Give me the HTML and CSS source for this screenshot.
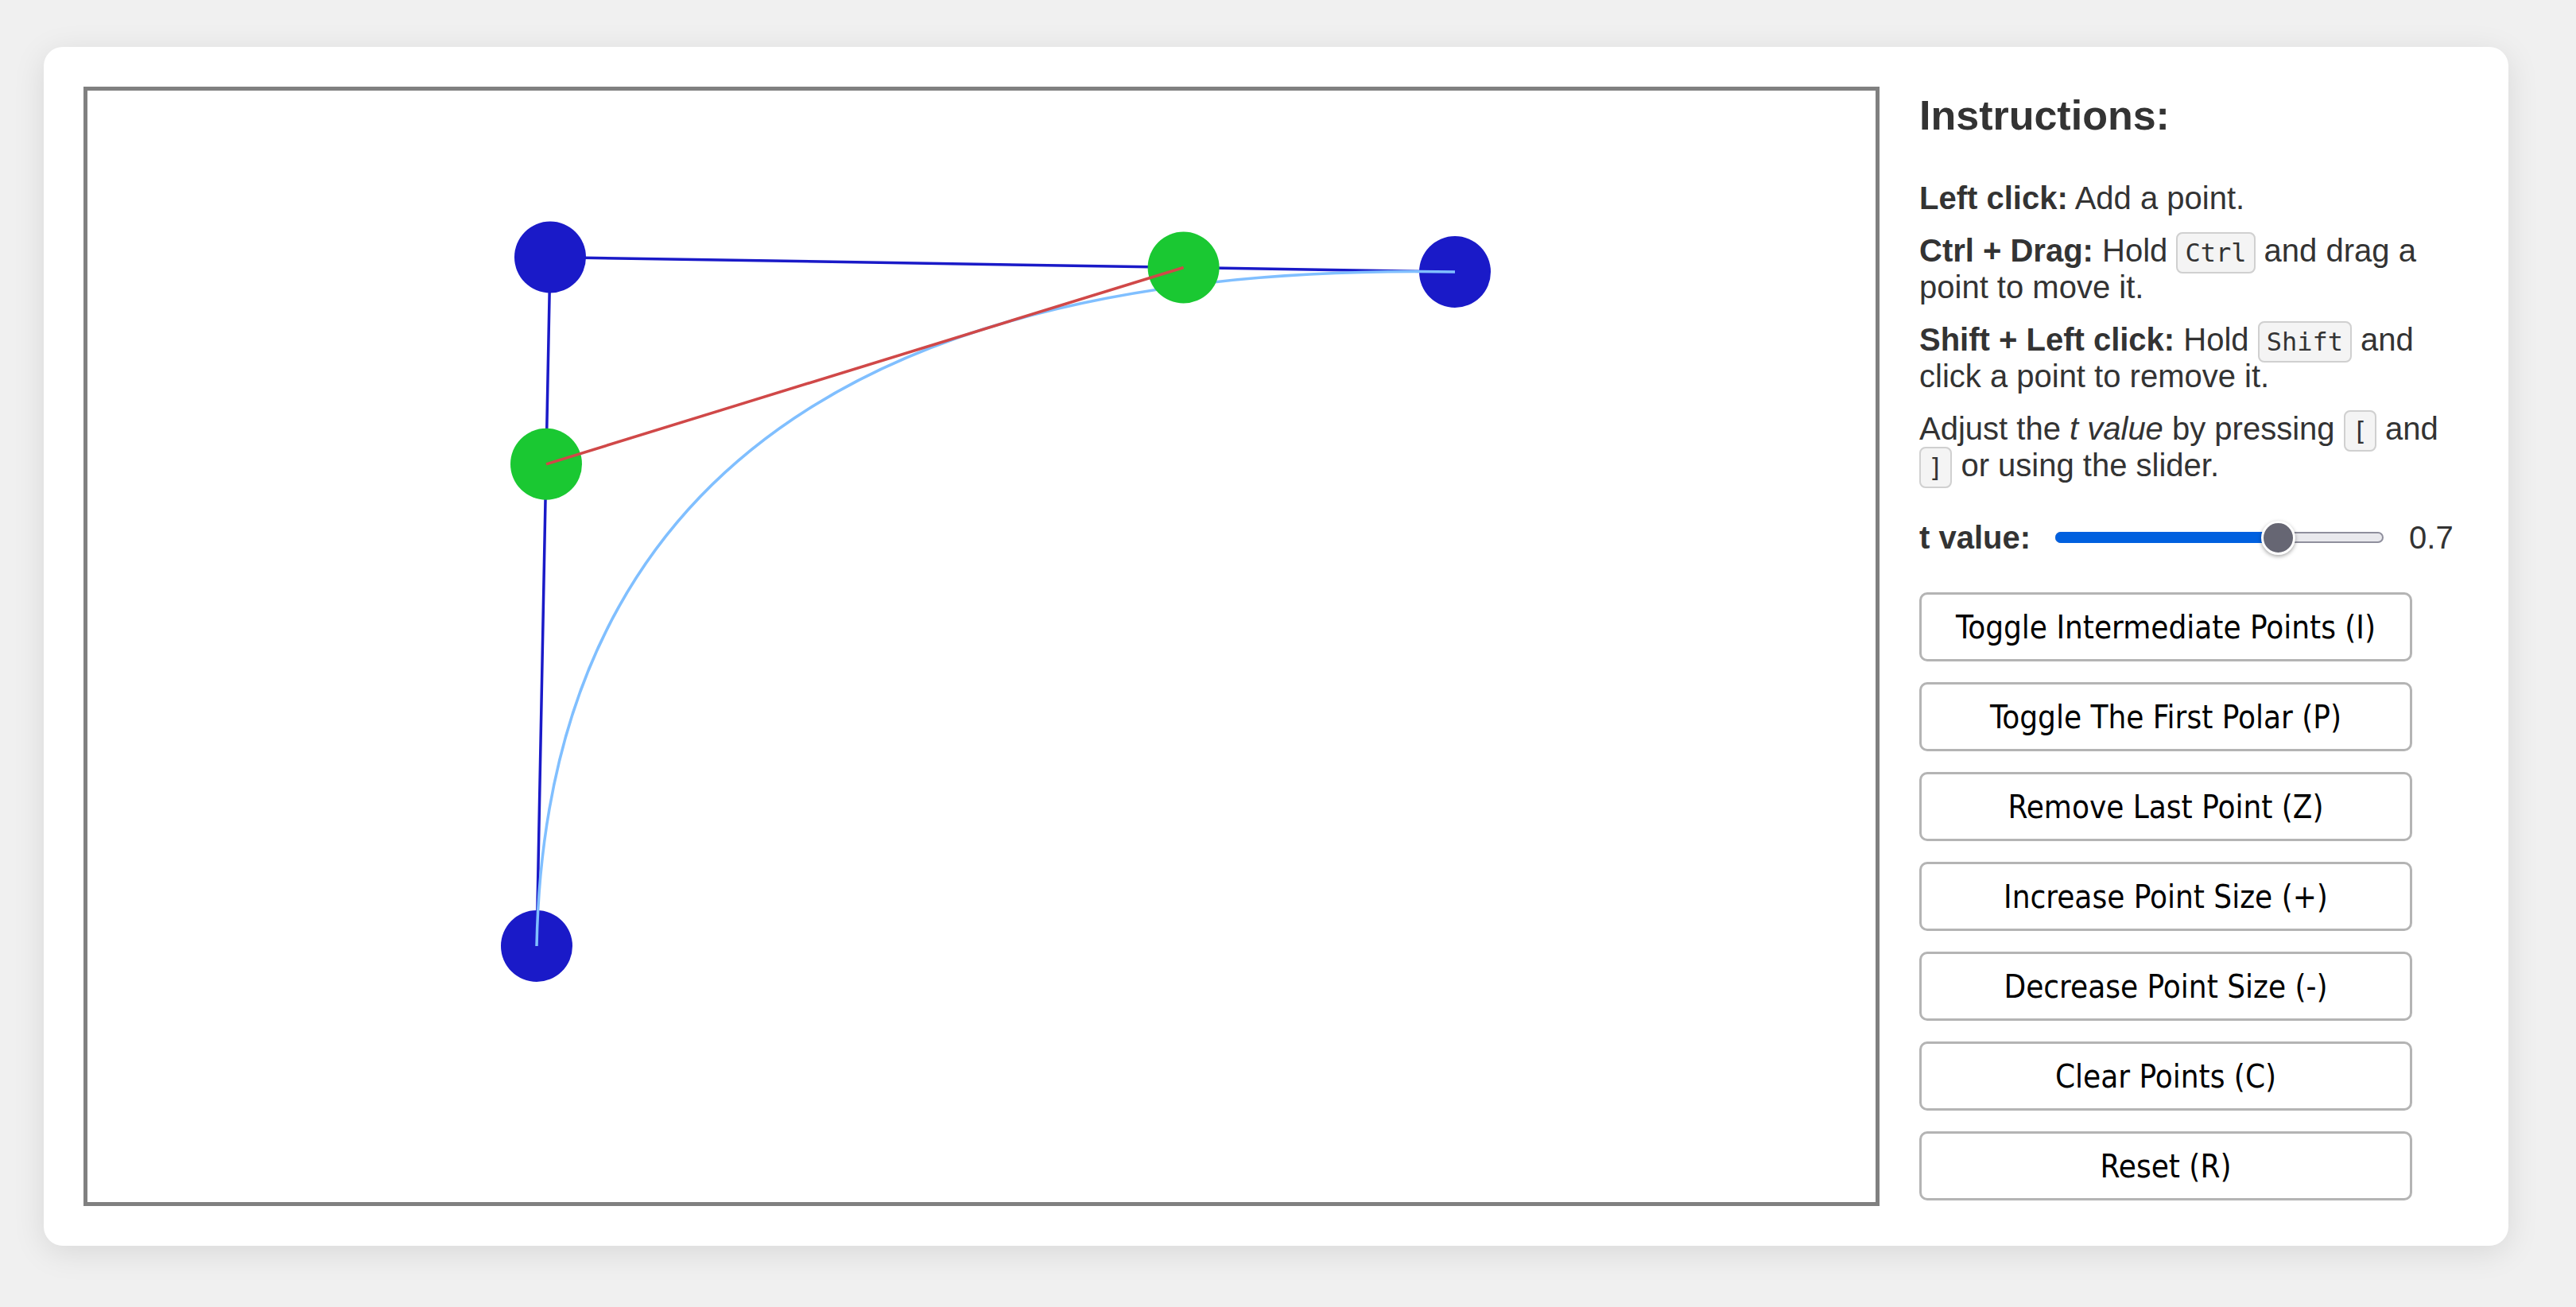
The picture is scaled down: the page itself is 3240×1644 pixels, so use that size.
FILE: index.html
```html
<!DOCTYPE html>
<html lang="en">
<head>
<meta charset="utf-8">
<title>De Casteljau Bézier Demo</title>
<link rel="stylesheet" href="styles.css">
</head>
<body>
<div class="app">
  <div class="stage">
    <svg class="canvas" viewBox="110 114 2249 1398" xmlns="http://www.w3.org/2000/svg">
      <polyline class="ctrl-line" points="675,1190 692,323.5 1830,342"/>
      <circle class="ctrl-pt" cx="692" cy="323.5" r="45"/>
      <circle class="ctrl-pt" cx="1830" cy="342" r="45"/>
      <circle class="ctrl-pt" cx="675" cy="1190" r="45"/>
      <path class="curve" d="M675 1190 Q692 323.5 1830 342"/>
      <circle class="mid-pt" cx="687" cy="583.8" r="45"/>
      <circle class="mid-pt" cx="1488.6" cy="336.5" r="45"/>
      <line class="polar" x1="687" y1="583.8" x2="1488.6" y2="336.5"/>
    </svg>
  </div>
  <aside class="panel">
    <h2 class="title">Instructions:</h2>
    <p class="tip first"><b>Left click:</b> Add a point.</p>
    <p class="tip"><b>Ctrl + Drag:</b> Hold <code class="key">Ctrl</code> and drag a point to move it.</p>
    <p class="tip"><b>Shift + Left click:</b> Hold <code class="key">Shift</code> and click a point to remove it.</p>
    <p class="tip">Adjust the <i>t value</i> by pressing <code class="key">[</code> and <code class="key">]</code> or using the slider.</p>
    <div class="slider-row">
      <span class="slider-label">t value:</span>
      <div class="slider">
        <div class="track"></div>
        <div class="fill" style="width:282px"></div>
        <div class="thumb" style="left:259px"></div>
      </div>
      <span class="slider-value">0.7</span>
    </div>
    <div class="buttons">
      <button class="btn">Toggle Intermediate Points (I)</button>
      <button class="btn">Toggle The First Polar (P)</button>
      <button class="btn">Remove Last Point (Z)</button>
      <button class="btn">Increase Point Size (+)</button>
      <button class="btn">Decrease Point Size (-)</button>
      <button class="btn">Clear Points (C)</button>
      <button class="btn">Reset (R)</button>
    </div>
  </aside>
</div>
</body>
</html>
```

FILE: styles.css
```css
html, body {
  margin: 0;
}
body {
  background: #f0f0f0;
  padding: 59px 0 0 55px;
  min-height: 1644px;
  box-sizing: border-box;
  font-family: "Liberation Sans", Arial, sans-serif;
  color: #333;
}
.app {
  display: flex;
  gap: 50px;
  width: 3100px;
  box-sizing: border-box;
  padding: 50px;
  background: #fff;
  border-radius: 24px;
  box-shadow: 0 8px 40px rgba(0, 0, 0, 0.1);
}
.stage {
  flex: none;
}
.canvas {
  display: block;
  width: 2249px;
  height: 1398px;
  border: 5px solid #808080;
  background: #fff;
}
.ctrl-line {
  fill: none;
  stroke: #1a1ac8;
  stroke-width: 3.5;
}
.ctrl-pt {
  fill: #1a1ac8;
}
.curve {
  fill: none;
  stroke: #80bfff;
  stroke-width: 3.5;
}
.mid-pt {
  fill: #1ac832;
}
.polar {
  stroke: #d04848;
  stroke-width: 3.5;
}
.panel {
  flex: 1;
  display: flex;
  flex-direction: column;
  font-size: 40px;
  line-height: 46px;
}
.title {
  margin: 6px 0 0;
  font-size: 52px;
  font-weight: bold;
  line-height: 60px;
}
.tip {
  margin: 20px 0 0;
  line-height: 46px;
}
.tip.first {
  margin-top: 51px;
}
.key {
  font-family: "DejaVu Sans Mono", "Liberation Mono", monospace;
  font-size: 32px;
  line-height: 1;
  background: #f4f4f4;
  border: 2px solid #d0d0d0;
  border-radius: 8px;
  padding: 5px 9px;
  color: #333;
}
.slider-row {
  margin-top: 45px;
  height: 46px;
  display: flex;
  align-items: center;
}
.slider-label {
  font-weight: bold;
}
.slider {
  position: relative;
  width: 413px;
  height: 43px;
  margin-left: 31px;
  display: flex;
  align-items: center;
}
.track {
  flex: 1;
  height: 14px;
  box-sizing: border-box;
  border: 2px solid #8f8f9d;
  border-radius: 7px;
  background: #e9e9ed;
}
.fill {
  position: absolute;
  left: 0;
  top: 14.5px;
  height: 14px;
  border-radius: 7px;
  background: #0060df;
}
.thumb {
  position: absolute;
  top: 0;
  width: 43px;
  height: 43px;
  box-sizing: border-box;
  border-radius: 50%;
  background: #666673;
  border: 3px solid #fff;
  box-shadow: 0 2px 5px rgba(0, 0, 0, 0.35);
}
.slider-value {
  margin-left: 32px;
}
.buttons {
  margin-top: 46px;
  display: flex;
  flex-direction: column;
  gap: 26px;
}
.btn {
  width: 620px;
  height: 87px;
  padding: 0;
  background: #fff;
  border: 3px solid #b4b4b4;
  border-radius: 10px;
  font-family: "DejaVu Sans Condensed", "DejaVu Sans", sans-serif;
  font-stretch: semi-condensed;
  font-size: 40px;
  color: #000;
}
```
